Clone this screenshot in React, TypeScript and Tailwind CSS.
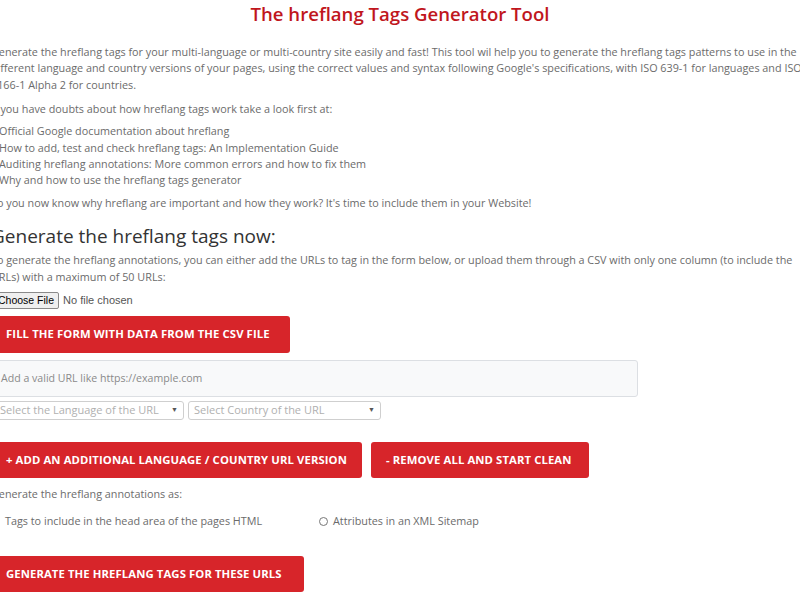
import React from "react";

const font = { fontFamily: '"Open Sans", "Liberation Sans", sans-serif' };

function RedButton({ children, className = "" }: { children: React.ReactNode; className?: string }) {
  return (
    <div
      className={`flex items-center rounded-[3px] bg-[#d7252a] text-white font-bold text-[11.3px] uppercase whitespace-nowrap tracking-[0.1px] ${className}`}
    >
      {children}
    </div>
  );
}

export default function App() {
  return (
    <div className="w-[800px] h-[600px] overflow-hidden bg-white" style={font}>
      <div className="ml-[-9px] w-[818px] text-[#6b6b6b] text-[10.8px] leading-[16.4px]">
        <h1 className="text-center text-[18.6px] leading-[28px] font-semibold text-[#c0161d]">
          The hreflang Tags Generator Tool
        </h1>

        <p className="mt-[16px] whitespace-nowrap">
          Generate the hreflang tags for your multi-language or multi-country site easily and fast! This tool wil help you to generate the hreflang tags patterns to use in the
          <br />
          different language and country versions of your pages, using the correct values and syntax following Google's specifications, with ISO 639-1 for languages and ISO
          <br />
          3166-1 Alpha 2 for countries.
        </p>

        <p className="mt-[8px] whitespace-nowrap">If you have doubts about how hreflang tags work take a look first at:</p>

        <ul className="mt-[5.5px] whitespace-nowrap pl-[8px]">
          <li>Official Google documentation about hreflang</li>
          <li>How to add, test and check hreflang tags: An Implementation Guide</li>
          <li>Auditing hreflang annotations: More common errors and how to fix them</li>
          <li>Why and how to use the hreflang tags generator</li>
        </ul>

        <p className="mt-[6.5px] whitespace-nowrap">
          So you now know why hreflang are important and how they work? It's time to include them in your Website!
        </p>

        <h2 className="mt-[12.5px] text-[19px] leading-[24px] text-[#333333]">Generate the hreflang tags now:</h2>

        <p className="mt-[4px] whitespace-nowrap">
          To generate the hreflang annotations, you can either add the URLs to tag in the form below, or upload them through a CSV with only one column (to include the
          <br />
          URLs) with a maximum of 50 URLs:
        </p>

        <div className="mt-[7px] flex items-center h-[17px] whitespace-nowrap" style={{ fontFamily: '"Liberation Sans", Arial, sans-serif' }}>
          <span className="h-[17px] flex items-center pl-[6px] pr-[4px] border border-[#8a8a8a] rounded-[2px] bg-[#efefef] text-[10.5px] text-black">
            Choose File
          </span>
          <span className="ml-[4px] text-[11px] text-[#555]">No file chosen</span>
        </div>

        <RedButton className="mt-[7px] w-[299px] h-[37px] pl-[15px]">Fill the form with data from the CSV file</RedButton>

        <div className="mt-[7px] w-[647px] h-[37px] rounded-[3px] border border-[#dcdfe3] bg-[#f8f9fa] flex items-center pl-[9px] text-[10.6px] text-[#8a8a8a] whitespace-nowrap">
          Add a valid URL like https://example.com
        </div>

        <div className="mt-[4px] flex gap-[4px] h-[19px]">
          <div className="w-[193px] h-[19px] border border-[#cfcfcf] rounded-[3px] bg-white flex items-center justify-between pl-[8px] pr-[5px] text-[11px] text-[#b0b0b0] whitespace-nowrap">
            <span>Select the Language of the URL</span>
            <span className="text-[7px] text-[#555]">▼</span>
          </div>
          <div className="w-[193px] h-[19px] border border-[#cfcfcf] rounded-[3px] bg-white flex items-center justify-between pl-[5px] pr-[5px] text-[11px] text-[#b0b0b0] whitespace-nowrap">
            <span>Select Country of the URL</span>
            <span className="text-[7px] text-[#555]">▼</span>
          </div>
        </div>

        <div className="mt-[22px] flex gap-[9px]">
          <RedButton className="w-[371px] h-[36px] pl-[15px]">+ Add an additional language / country URL version</RedButton>
          <RedButton className="w-[218px] h-[36px] pl-[15px]">- Remove all and start clean</RedButton>
        </div>

        <p className="mt-[8px] whitespace-nowrap">Generate the hreflang annotations as:</p>

        <div className="mt-[10.5px] flex items-center whitespace-nowrap">
          <div className="w-[328px] flex items-center">
            <span className="w-[9px] h-[9px] rounded-full border border-[#777] bg-white" />
            <span className="ml-[5px]">Tags to include in the head area of the pages HTML</span>
          </div>
          <span className="w-[9px] h-[9px] rounded-full border border-[#777] bg-white" />
          <span className="ml-[5px]">Attributes in an XML Sitemap</span>
        </div>

        <RedButton className="mt-[27px] w-[313px] h-[36px] pl-[15px]">Generate the hreflang tags for these URLs</RedButton>
      </div>
    </div>
  );
}
